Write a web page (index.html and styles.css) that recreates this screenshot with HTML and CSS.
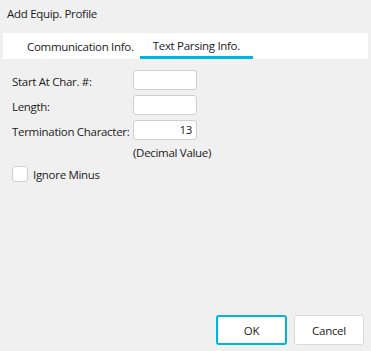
FILE: index.html
```html
<!DOCTYPE html>
<html>
<head>
<meta charset="utf-8">
<link rel="stylesheet" href="styles.css">
</head>
<body>
<div class="dialog">
  <div class="title">Add Equip. Profile</div>
  <div class="tabs">
    <div class="tab first">Communication Info.</div>
    <div class="tab active">Text Parsing Info.</div>
  </div>
  <div class="form">
    <label class="lbl">Start At Char. #:</label>
    <div class="input"></div>
    <label class="lbl">Length:</label>
    <div class="input"></div>
    <label class="lbl">Termination Character:</label>
    <div class="input num">13</div>
    <div></div>
    <div class="hint">(Decimal Value)</div>
  </div>
  <div class="check-row">
    <span class="checkbox"></span>
    <span class="check-label">Ignore Minus</span>
  </div>
  <div class="buttons">
    <div class="btn primary">OK</div>
    <div class="btn">Cancel</div>
  </div>
</div>
</body>
</html>
```
FILE: styles.css
```css
html, body {
  margin: 0;
  padding: 0;
  background: #f0f0f0;
}
body {
  font-family: "Open Sans", "Noto Sans", sans-serif;
  font-size: 11.5px;
  letter-spacing: -0.3px;
  color: #1b1b1b;
}
.dialog {
  height: 351px;
  display: flex;
  flex-direction: column;
  box-sizing: border-box;
}
.title {
  height: 16px;
  line-height: 16px;
  margin-top: 6px;
  padding-left: 7px;
}
.tabs {
  margin: 11px 3px 0 3px;
  height: 26px;
  background: #ffffff;
  display: flex;
  align-items: stretch;
}
.tab {
  box-sizing: border-box;
  line-height: 24px;
  padding-top: 2px;
  white-space: nowrap;
}
.tab.first {
  padding-left: 24px;
  padding-right: 6px;
}
.tab.active {
  padding-left: 13px;
  padding-right: 13px;
  line-height: 21px;
  border-bottom: 3px solid #00b4dc;
}
.form {
  display: grid;
  grid-template-columns: 121px 64px;
  grid-auto-rows: 20px;
  row-gap: 5px;
  padding-left: 12px;
  margin-top: 11px;
}
.lbl {
  line-height: 20px;
  padding-top: 2px;
  box-sizing: border-box;
  white-space: nowrap;
}
.input {
  box-sizing: border-box;
  height: 20px;
  background: #ffffff;
  border: 1px solid #cfcfcf;
  border-radius: 3px;
  line-height: 18px;
  padding: 0 4px;
}
.input.num {
  text-align: right;
}
.hint {
  line-height: 20px;
  white-space: nowrap;
  margin-top: -2px;
}
.check-row {
  display: flex;
  align-items: center;
  padding-left: 12px;
  margin-top: 1px;
  gap: 5px;
}
.checkbox {
  box-sizing: border-box;
  width: 16px;
  height: 16px;
  background: #ffffff;
  border: 1px solid #cfcfcf;
  border-radius: 3px;
}
.buttons {
  margin-top: auto;
  display: flex;
  justify-content: flex-end;
  gap: 7px;
  padding: 0 7px 6px 0;
}
.btn {
  box-sizing: border-box;
  width: 70px;
  height: 30px;
  background: #ffffff;
  border: 1px solid #dadada;
  border-radius: 3px;
  display: flex;
  align-items: center;
  justify-content: center;
}
.btn.primary {
  width: 71px;
  border: 2px solid #00b4dc;
}
```
